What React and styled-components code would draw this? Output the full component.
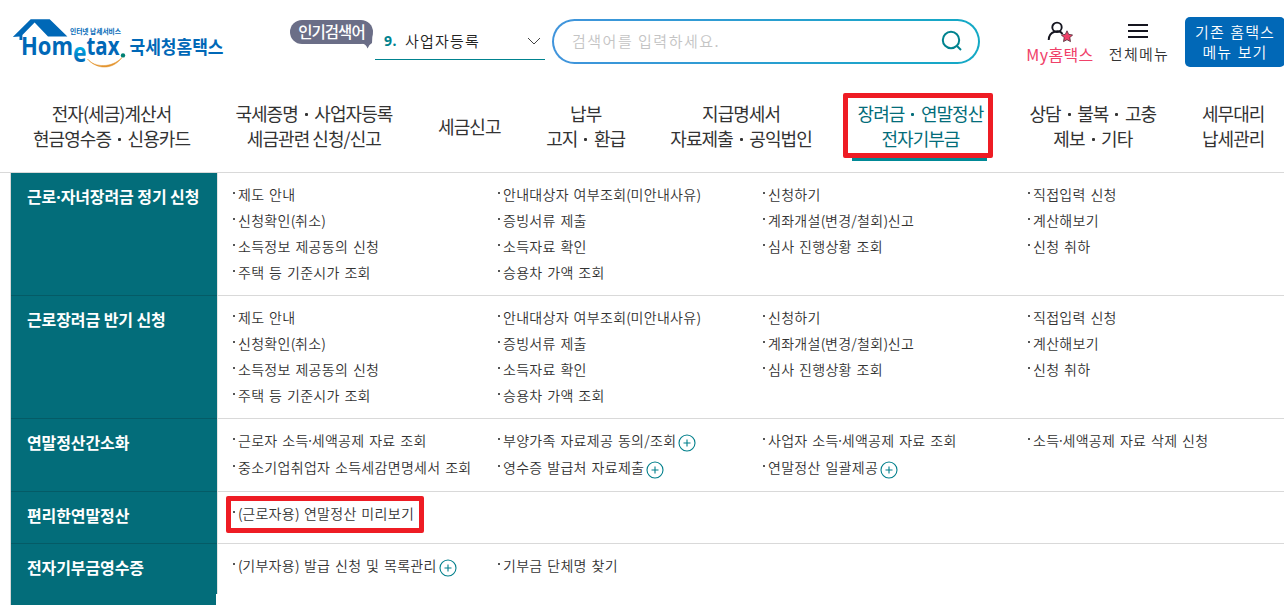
import { createGlobalStyle, styled } from "styled-components";

const NAV = [
  { lines: ["전자(세금)계산서", "현금영수증・신용카드"], width: 157 },
  { lines: ["국세증명・사업자등록", "세금관련 신청/신고"], width: 157 },
  { lines: ["세금신고"], width: 63 },
  { lines: ["납부", "고지・환급"], width: 79 },
  { lines: ["지급명세서", "자료제출・공익법인"], width: 141 },
  { lines: ["장려금・연말정산", "전자기부금"], width: 127, active: true },
  { lines: ["상담・불복・고충", "제보・기타"], width: 127 },
  { lines: ["세무대리", "납세관리"], width: 63 },
];

const BENEFIT_MENU = [
  ["제도 안내", "신청확인(취소)", "소득정보 제공동의 신청", "주택 등 기준시가 조회"],
  ["안내대상자 여부조회(미안내사유)", "증빙서류 제출", "소득자료 확인", "승용차 가액 조회"],
  ["신청하기", "계좌개설(변경/철회)신고", "심사 진행상황 조회"],
  ["직접입력 신청", "계산해보기", "신청 취하"],
];

// a trailing "+" marks an entry that opens a sub menu
const SECTIONS = [
  { title: "근로·자녀장려금 정기 신청", height: 123, columns: BENEFIT_MENU },
  { title: "근로장려금 반기 신청", height: 123, columns: BENEFIT_MENU },
  {
    title: "연말정산간소화",
    height: 73,
    line: 27,
    columns: [
      ["근로자 소득·세액공제 자료 조회", "중소기업취업자 소득세감면명세서 조회"],
      ["부양가족 자료제공 동의/조회+", "영수증 발급처 자료제출+"],
      ["사업자 소득·세액공제 자료 조회", "연말정산 일괄제공+"],
      ["소득·세액공제 자료 삭제 신청"],
    ],
  },
  {
    title: "편리한연말정산",
    height: 52,
    columns: [["(근로자용) 연말정산 미리보기"]],
    marked: true,
  },
  {
    title: "전자기부금영수증",
    height: 50,
    last: true,
    columns: [["(기부자용) 발급 신청 및 목록관리+"], ["기부금 단체명 찾기"]],
  },
];

const Logo = () => (
  <LogoSvg viewBox="0 0 220 60" role="img" aria-label="Hometax 국세청홈택스">
    <defs>
      <linearGradient id="logoE" x1="0" y1="0" x2="0" y2="1">
        <stop offset="0.3" stopColor="#00b9ec" />
        <stop offset="0.75" stopColor="#0068b7" />
      </linearGradient>
    </defs>
    <path
      d="M2.8 27 L20.7 9.3 H39.7 L57.4 26.4 H38 L24.6 12.6 L12.4 25 V30 H9.5 V26.4 Z"
      fill="#0068b7"
    />
    <LatinText x="11" y="45.4" textLength="52">Hom</LatinText>
    <LatinText x="63" y="52" textLength="13.5" $e>e</LatinText>
    <LatinText x="76.5" y="45.4" textLength="33">tax</LatinText>
    <circle cx="113" cy="45.4" r="2.2" fill="#008073" />
    <path
      d="M77.5 49 C85 58 102 58 112 47.5 C103 60 87 60 77.5 49 Z"
      fill="#e3942f"
      stroke="#e3942f"
      strokeWidth="0.5"
    />
    <KoreanText x="60" y="24" textLength="51" $size={6.5}>인터넷 납세서비스</KoreanText>
    <KoreanText x="119.5" y="43.5" textLength="94" $size={18}>국세청홈택스</KoreanText>
  </LogoSvg>
);

const MyIcon = () => (
  <svg width="26" height="22" viewBox="0 0 26 22" fill="none">
    <circle cx="10" cy="6.3" r="4.7" stroke="#15151f" strokeWidth="1.9" />
    <path d="M1.7 19 C2 9.5 12.5 8.5 15.5 13" stroke="#15151f" strokeWidth="1.9" />
    <path
      d="M20 9.8 l1.7 3.6 3.9 .5 -2.8 2.8 .7 3.9 -3.5 -1.9 -3.5 1.9 .7 -3.9 -2.8 -2.8 3.9 -.5z"
      fill="#f04169"
      stroke="#4b2933"
      strokeWidth="0.8"
    />
  </svg>
);

const PlusIcon = () => (
  <PlusSvg viewBox="0 0 18 18" fill="none" stroke="#007f8b">
    <circle cx="9" cy="9" r="8" strokeWidth="1.1" />
    <path d="M5.5 9 H12.5 M9 5.5 V12.5" strokeWidth="1.1" />
  </PlusSvg>
);

// middle dots and brackets are set tighter than the font has them
const TightText = ({ children }) => (
  <span>
    {children.split(/([·()])/).map((part, i) => {
      if (part === "·") return <MiddleDot key={i}>·</MiddleDot>;
      if (part === "(" || part === ")") return <Bracket key={i}>{part}</Bracket>;
      return part;
    })}
  </span>
);

const MenuItem = ({ label, line, marked }) => {
  const expandable = label.endsWith("+");
  return (
    <Item $line={line}>
      <TightText>{expandable ? label.slice(0, -1) : label}</TightText>
      {expandable && <PlusIcon />}
      {marked && <ItemMark />}
    </Item>
  );
};

const App = () => {
  return (
    <>
      <GlobalStyle />
      <Page>
        <Header>
          <Logo />
          <PopularBadge>
            인기검색어
            <BadgeTail viewBox="0 0 12 16">
              <path d="M11.5 0 L11 10 Q8 11.5 6.5 15.5 Q5 11 1 10.5 Z" fill="#6b6e87" />
            </BadgeTail>
          </PopularBadge>
          <PopularSelect>
            <Rank>9.</Rank>
            <span>사업자등록</span>
            <Chevron viewBox="0 0 14 8">
              <path d="M1 1 L7 7 L13 1" fill="none" stroke="#444" />
            </Chevron>
          </PopularSelect>
          <SearchBox>
            <span>검색어를 입력하세요.</span>
            <svg width="22" height="22" viewBox="0 0 22 22" fill="none" stroke="#00838f" strokeWidth="2">
              <circle cx="10" cy="10" r="8.2" />
              <path d="M15.5 15.5 L20 20" />
            </svg>
          </SearchBox>
          <MyHometax>
            <MyIcon />
            <span>My홈택스</span>
          </MyHometax>
          <AllMenu>
            <Bars>
              <span />
              <span />
              <span />
            </Bars>
            전체메뉴
          </AllMenu>
          <OldSiteButton>
            <span>기존 홈택스</span>
            <span>메뉴 보기</span>
          </OldSiteButton>
        </Header>
        <Nav>
          {NAV.map((item) => (
            <NavItem key={item.lines[0]} $width={item.width} $active={item.active}>
              {item.lines.map((line) => (
                <span key={line}>
                  {line.split("・").map((part, i) => (
                    <span key={part}>
                      {i > 0 && <NavDot />}
                      {part}
                    </span>
                  ))}
                </span>
              ))}
              {item.active && <ActiveBar />}
              {item.active && <NavMark />}
            </NavItem>
          ))}
        </Nav>
        <MenuPanel>
          {SECTIONS.map((section) => (
            <Section key={section.title} $height={section.height}>
              <SectionTitle $last={section.last}>
                <TightText>{section.title}</TightText>
              </SectionTitle>
              <Columns $last={section.last}>
                {section.columns.map((column) => (
                  <Column key={column[0]}>
                    {column.map((label) => (
                      <MenuItem key={label} label={label} line={section.line} marked={section.marked} />
                    ))}
                  </Column>
                ))}
              </Columns>
            </Section>
          ))}
          <SideFill />
        </MenuPanel>
      </Page>
    </>
  );
};

export default App;

const GlobalStyle = createGlobalStyle`
  * {
    box-sizing: border-box;
  }
  body {
    margin: 0;
    background: #fff;
    color: #333;
    font-family: "Noto Sans CJK KR", sans-serif;
    overflow: hidden;
  }
`;

const Page = styled.div`
  width: 1284px;
  height: 605px;
  overflow: hidden;
`;

const Header = styled.header`
  height: 88px;
  padding: 10px 0 0 10px;
  display: flex;
  align-items: flex-start;
`;

const LogoSvg = styled.svg`
  width: 220px;
  height: 60px;
  flex: none;
`;

const LatinText = styled.text.attrs({ lengthAdjust: "spacingAndGlyphs" })`
  font-family: "Open Sans", sans-serif;
  font-size: ${(props) => (props.$e ? 26 : 25)}px;
  font-weight: 700;
  fill: ${(props) => (props.$e ? "url(#logoE)" : "#0068b7")};
`;

const KoreanText = styled.text.attrs({ lengthAdjust: "spacingAndGlyphs" })`
  font-size: ${(props) => props.$size}px;
  font-weight: 700;
  fill: #0068b7;
`;

const PopularBadge = styled.div`
  position: relative;
  flex: none;
  width: 83px;
  height: 24px;
  margin: 10px 0 0 60px;
  border-radius: 12px;
  background: #6b6e87;
  color: #fff;
  font-size: 15.5px;
  font-weight: 500;
  letter-spacing: -1px;
  line-height: 22px;
  text-align: center;
`;

const BadgeTail = styled.svg`
  position: absolute;
  right: 0;
  bottom: -5px;
  width: 12px;
  height: 16px;
`;

const PopularSelect = styled.div`
  flex: none;
  width: 170px;
  height: 38px;
  margin: 12px 0 0 2px;
  padding: 0 4px 0 9px;
  border-bottom: 1px solid #00838f;
  display: flex;
  align-items: center;
  color: #222;
  font-size: 15px;
  font-weight: 350;
  letter-spacing: 1.2px;
`;

const Rank = styled.span`
  width: 21px;
  color: #00838f;
  font-family: "Noto Sans", sans-serif;
  font-size: 14px;
  font-weight: 700;
  letter-spacing: 0.4px;
`;

const Chevron = styled.svg`
  width: 14px;
  height: 8px;
  margin-left: auto;
`;

const SearchBox = styled.div`
  flex: none;
  width: 428px;
  height: 45px;
  margin: 9px 0 0 7px;
  padding: 0 15px 2px 18px;
  border: 2px solid transparent;
  border-radius: 23px;
  background:
    linear-gradient(#fff, #fff) padding-box,
    linear-gradient(to right, #4094dc, #13a9c5) border-box;
  display: flex;
  align-items: center;
  justify-content: space-between;
  color: #c4c4c4;
  font-size: 15px;
  font-weight: 350;
  letter-spacing: 1.5px;
`;

const MyHometax = styled.div`
  flex: none;
  width: 70px;
  margin: 11px 0 0 45px;
  display: flex;
  flex-direction: column;
  align-items: center;
  color: #f04169;
  font-size: 16px;
  line-height: 22px;
  letter-spacing: 0.4px;
`;

const AllMenu = styled.div`
  flex: none;
  width: 62px;
  margin: 14px 0 0 13px;
  display: flex;
  flex-direction: column;
  align-items: center;
  font-size: 15px;
  font-weight: 350;
  line-height: 22px;
  letter-spacing: 1.3px;
  white-space: nowrap;
`;

const Bars = styled.div`
  width: 20px;
  height: 19px;
  margin-right: 2px;
  display: flex;
  flex-direction: column;
  gap: 4px;
  & span {
    height: 2px;
    background: #15151f;
  }
`;

const OldSiteButton = styled.div`
  flex: none;
  width: 100px;
  height: 50px;
  margin: 7px 0 0 15px;
  padding-top: 5px;
  border-radius: 5px;
  background: #0168b7;
  color: #fff;
  display: flex;
  flex-direction: column;
  align-items: center;
  font-size: 15px;
  font-weight: 350;
  line-height: 20px;
  letter-spacing: 1.1px;
  word-spacing: 1px;
`;

const Nav = styled.nav`
  height: 85px;
  padding: 0 0 8px 33px;
  border-bottom: 1px solid #d9d9d9;
  display: flex;
  align-items: center;
  gap: 45.4px;
`;

const NavItem = styled.div`
  position: relative;
  flex: none;
  width: ${(props) => props.$width}px;
  display: flex;
  flex-direction: column;
  align-items: center;
  color: ${(props) => (props.$active ? "#036d7a" : "#333")};
  font-size: 18px;
  font-weight: 400;
  letter-spacing: -0.95px;
  line-height: 25px;
  white-space: nowrap;
`;

const NavDot = styled.i`
  display: inline-block;
  width: 3px;
  height: 3px;
  margin: 0 6.5px 5px 7px;
  border-radius: 1px;
  background: currentColor;
`;

const ActiveBar = styled.div`
  position: absolute;
  left: -5px;
  bottom: -10px;
  width: 135px;
  height: 4px;
  background: #008996;
`;

const NavMark = styled.div`
  position: absolute;
  left: -14px;
  top: -8px;
  width: 150px;
  height: 65px;
  border: 5px solid #ee1c24;
  border-radius: 2px;
`;

const MenuPanel = styled.div`
  margin-left: 10px;
  border-left: 1px solid #d9d9d9;
`;

const Section = styled.section`
  height: ${(props) => props.$height}px;
  display: flex;
`;

const SectionTitle = styled.h2`
  flex: none;
  width: 206px;
  margin: 0;
  padding: 10px 0 0 16px;
  border-bottom: ${(props) => (props.$last ? "none" : "1px solid #045b66")};
  background: #036d7a;
  color: #fff;
  font-size: 16px;
  font-weight: 700;
  letter-spacing: -0.1px;
  line-height: 26px;
  white-space: nowrap;
`;

const SideFill = styled.div`
  width: 205px;
  height: 12px;
  background: #036d7a;
`;

const Columns = styled.div`
  flex: 1;
  padding: 8px 0 0 15px;
  border-left: 1px solid #e3e3e3;
  border-bottom: ${(props) => (props.$last ? "none" : "1px solid #d9d9d9")};
  display: grid;
  grid-template-columns: repeat(4, 265px);
`;

const Column = styled.ul`
  margin: 0;
  padding: 0;
  list-style: none;
`;

const Item = styled.li`
  position: relative;
  height: ${(props) => props.$line || 26}px;
  display: flex;
  align-items: flex-start;
  font-size: 14px;
  font-weight: 350;
  letter-spacing: 0.3px;
  word-spacing: 1.3px;
  line-height: 26px;
  white-space: nowrap;
  &::before {
    content: "";
    width: 2px;
    height: 2px;
    margin: 11px 3px 0 0;
    background: #555;
  }
`;

const MiddleDot = styled.span`
  margin: 0 -2.5px;
`;

const Bracket = styled.span`
  letter-spacing: -0.4px;
`;

const PlusSvg = styled.svg`
  width: 18px;
  height: 18px;
  margin: 7px 0 0 2px;
`;

const ItemMark = styled.span`
  position: absolute;
  left: -7px;
  top: -4px;
  width: 198px;
  height: 37px;
  border: 5px solid #ee1c24;
  border-radius: 2px;
`;
